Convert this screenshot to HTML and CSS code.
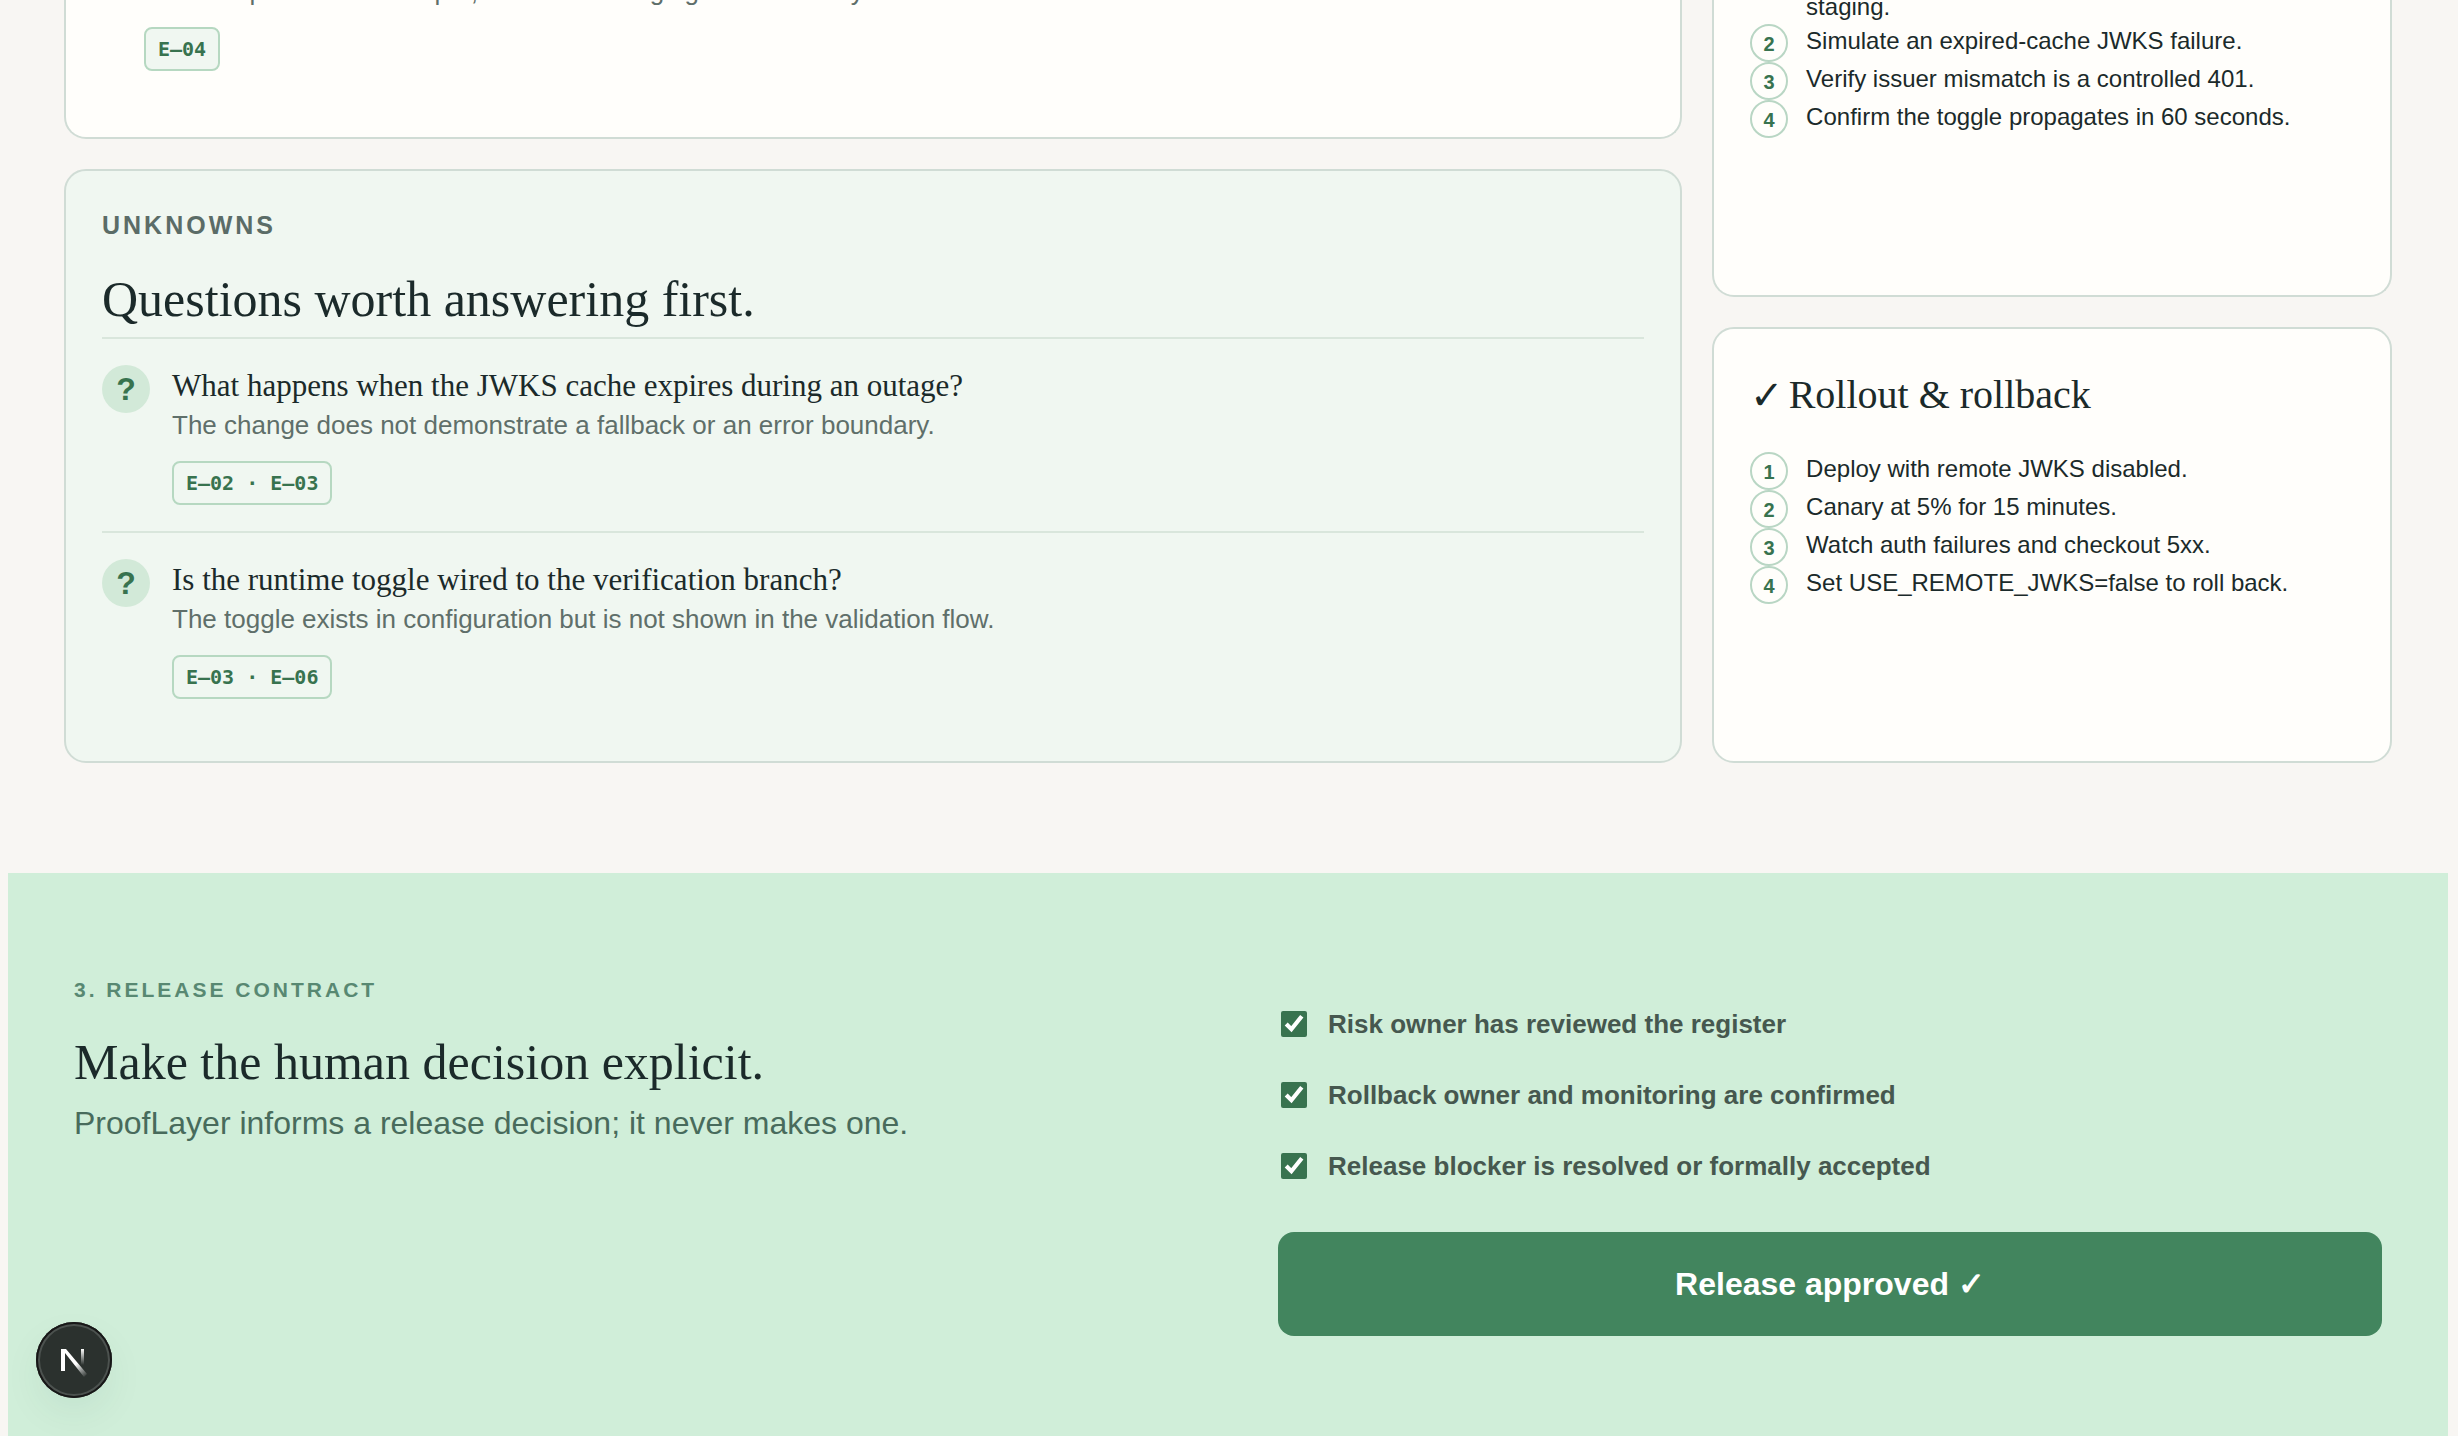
FILE: index.html
```html
<!DOCTYPE html>
<html lang="en">
<head>
  <meta charset="UTF-8">
  <meta name="viewport" content="width=device-width, initial-scale=1">
  <title>ProofLayer</title>
  <link rel="stylesheet" href="styles.css">
</head>
<body>

  <main class="page">
    <div class="report">
      <div class="column">
        <section class="panel panel-open findings">
          <p class="detail">It covers production in depth, but not the staging or test canary.</p>
          <span class="tag">E–04</span>
        </section>

        <section class="panel unknowns">
          <p class="panel-label">Unknowns</p>
          <h2>Questions worth answering first.</h2>

          <article class="question">
            <span class="mark">?</span>
            <div>
              <h3>What happens when the JWKS cache expires during an outage?</h3>
              <p class="detail">The change does not demonstrate a fallback or an error boundary.</p>
              <span class="tag">E–02 · E–03</span>
            </div>
          </article>

          <article class="question">
            <span class="mark">?</span>
            <div>
              <h3>Is the runtime toggle wired to the verification branch?</h3>
              <p class="detail">The toggle exists in configuration but is not shown in the validation flow.</p>
              <span class="tag">E–03 · E–06</span>
            </div>
          </article>
        </section>
      </div>

      <aside class="column side">
        <section class="panel panel-open tests">
          <p class="step-rest">staging.</p>
          <ol class="steps">
            <li><b>2</b><span>Simulate an expired-cache JWKS failure.</span></li>
            <li><b>3</b><span>Verify issuer mismatch is a controlled 401.</span></li>
            <li><b>4</b><span>Confirm the toggle propagates in 60 seconds.</span></li>
          </ol>
        </section>

        <section class="panel rollout">
          <h2 class="side-title"><span class="tick">✓</span>Rollout &amp; rollback</h2>
          <ol class="steps">
            <li><b>1</b><span>Deploy with remote JWKS disabled.</span></li>
            <li><b>2</b><span>Canary at 5% for 15 minutes.</span></li>
            <li><b>3</b><span>Watch auth failures and checkout 5xx.</span></li>
            <li><b>4</b><span>Set USE_REMOTE_JWKS=false to roll back.</span></li>
          </ol>
        </section>
      </aside>
    </div>

    <section class="contract">
      <div>
        <p class="eyebrow">3. Release contract</p>
        <h2>Make the human decision explicit.</h2>
        <p class="lead">ProofLayer informs a release decision; it never makes one.</p>
      </div>

      <form class="approval">
        <label for="risk"><input type="checkbox" id="risk" checked> Risk owner has reviewed the register</label>
        <label for="rollback"><input type="checkbox" id="rollback" checked> Rollback owner and monitoring are confirmed</label>
        <label for="blocker"><input type="checkbox" id="blocker" checked> Release blocker is resolved or formally accepted</label>
        <button type="button" class="approve">Release approved ✓</button>
      </form>
    </section>
  </main>

  <button type="button" class="dev-badge" aria-label="Open dev tools">
    <svg width="76" height="76" viewBox="0 0 76 76" fill="none">
      <defs>
        <linearGradient id="diagonal" x1="40" y1="42" x2="50" y2="55" gradientUnits="userSpaceOnUse">
          <stop stop-color="#fff"/>
          <stop offset="1" stop-color="#fff" stop-opacity="0"/>
        </linearGradient>
        <linearGradient id="stem" x1="46" y1="27" x2="46" y2="43" gradientUnits="userSpaceOnUse">
          <stop stop-color="#fff"/>
          <stop offset="1" stop-color="#fff" stop-opacity="0"/>
        </linearGradient>
      </defs>
      <path d="M25 27h5l21 25-3 3-19-24v18h-4z" fill="url(#diagonal)"/>
      <path d="M45 27h3v16h-3z" fill="url(#stem)"/>
    </svg>
  </button>

</body>
</html>
```

FILE: styles.css
```css
* {
  box-sizing: border-box;
}

body {
  margin: 0;
  font-family: Arial, "Liberation Sans", sans-serif;
  background-color: #f8f6f3;
  color: #1b2a2a;
}

h2, h3, p, ol {
  margin: 0;
  padding: 0;
}

h2, h3 {
  font-family: Georgia, "Liberation Serif", serif;
  font-weight: 400;
}

h2 {
  font-size: 50px;
  line-height: 60px;
}

h3 {
  font-size: 31px;
  line-height: 42px;
}

.page {
  margin: 0 10px 0 8px;
}

.report {
  display: grid;
  grid-template-columns: 2.38fr 1fr;
  gap: 30px;
  padding: 0 56px;
}

.column {
  display: flex;
  flex-direction: column;
  gap: 30px;
}

.panel {
  padding: 36px;
  border: 2px solid #d0dcd5;
  border-radius: 22px;
  background-color: #fffefb;
}

.panel-open {
  border-top: 0;
  border-radius: 0 0 22px 22px;
  padding-top: 0;
}

.findings {
  height: 139px;
  padding-left: 78px;
}

.findings .detail {
  margin-top: -27px;
}

.unknowns {
  background-color: #f0f7f1;
}

.panel-label {
  margin-bottom: 26px;
  color: #5b6c67;
  font-size: 25px;
  font-weight: bold;
  letter-spacing: 3px;
  line-height: 36px;
  text-transform: uppercase;
}

.unknowns h2 {
  margin-bottom: 8px;
}

.question {
  display: flex;
  gap: 22px;
  padding: 26px 0;
  border-top: 2px solid #d9e6dc;
}

.mark {
  flex: none;
  width: 48px;
  height: 48px;
  border-radius: 50%;
  background-color: #d2e9d8;
  color: #38734f;
  font-size: 32px;
  font-weight: bold;
  line-height: 48px;
  text-align: center;
}

.detail {
  color: #5f6f6a;
  font-size: 26px;
  line-height: 36px;
}

.tag {
  display: block;
  width: fit-content;
  margin-top: 18px;
  padding: 0 12px;
  border: 2px solid #b6d8c1;
  border-radius: 8px;
  background-color: #f0f7f1;
  color: #38734f;
  font-family: "DejaVu Sans Mono", monospace;
  font-size: 20px;
  font-weight: bold;
  line-height: 40px;
}

.tests {
  height: 297px;
}

.rollout {
  flex: 1;
}

.side-title {
  display: flex;
  gap: 5px;
  margin-bottom: 27px;
  font-size: 40px;
}

.tick {
  font-family: "DejaVu Sans", sans-serif;
  font-weight: bold;
}

.steps {
  list-style: none;
}

.steps li {
  display: flex;
  gap: 18px;
  font-size: 24px;
  line-height: 34px;
}

.steps b {
  flex: none;
  width: 38px;
  height: 38px;
  border: 2px solid #b9d6c4;
  border-radius: 50%;
  color: #38734f;
  font-size: 20px;
  line-height: 36px;
  text-align: center;
}

.step-rest {
  margin-top: -10px;
  padding-left: 56px;
  font-size: 24px;
  line-height: 34px;
}

.contract {
  display: grid;
  grid-template-columns: 1fr 1fr;
  gap: 100px;
  margin-top: 110px;
  padding: 100px 66px;
  background-color: #d0eed9;
}

.eyebrow {
  margin-bottom: 25px;
  color: #588872;
  font-size: 21px;
  font-weight: bold;
  letter-spacing: 3px;
  line-height: 34px;
  text-transform: uppercase;
}

.lead {
  margin-top: 9px;
  color: #486b5c;
  font-size: 32px;
  line-height: 44px;
}

.approval {
  display: flex;
  flex-direction: column;
  gap: 31px;
  padding-top: 31px;
}

.approval label {
  display: flex;
  align-items: center;
  gap: 21px;
  color: #46584f;
  font-size: 26px;
  font-weight: bold;
  line-height: 40px;
}

.approval input {
  width: 26px;
  height: 26px;
  margin: 0 0 0 3px;
  accent-color: #38734f;
}

.approve {
  height: 104px;
  margin-top: 15px;
  border: 0;
  border-radius: 16px;
  background-color: #42855e;
  color: #fff;
  font-family: inherit;
  font-size: 32px;
  font-weight: bold;
}

.dev-badge {
  position: fixed;
  left: 36px;
  bottom: 38px;
  width: 76px;
  height: 76px;
  padding: 0;
  border: 0;
  border-radius: 50%;
  background-color: #2b312e;
  box-shadow: inset 0 0 0 2px #171717, inset 0 0 0 4px #4c524f, 0 16px 40px -4px rgba(0, 80, 60, 0.08);
}

.dev-badge svg {
  display: block;
}
```
